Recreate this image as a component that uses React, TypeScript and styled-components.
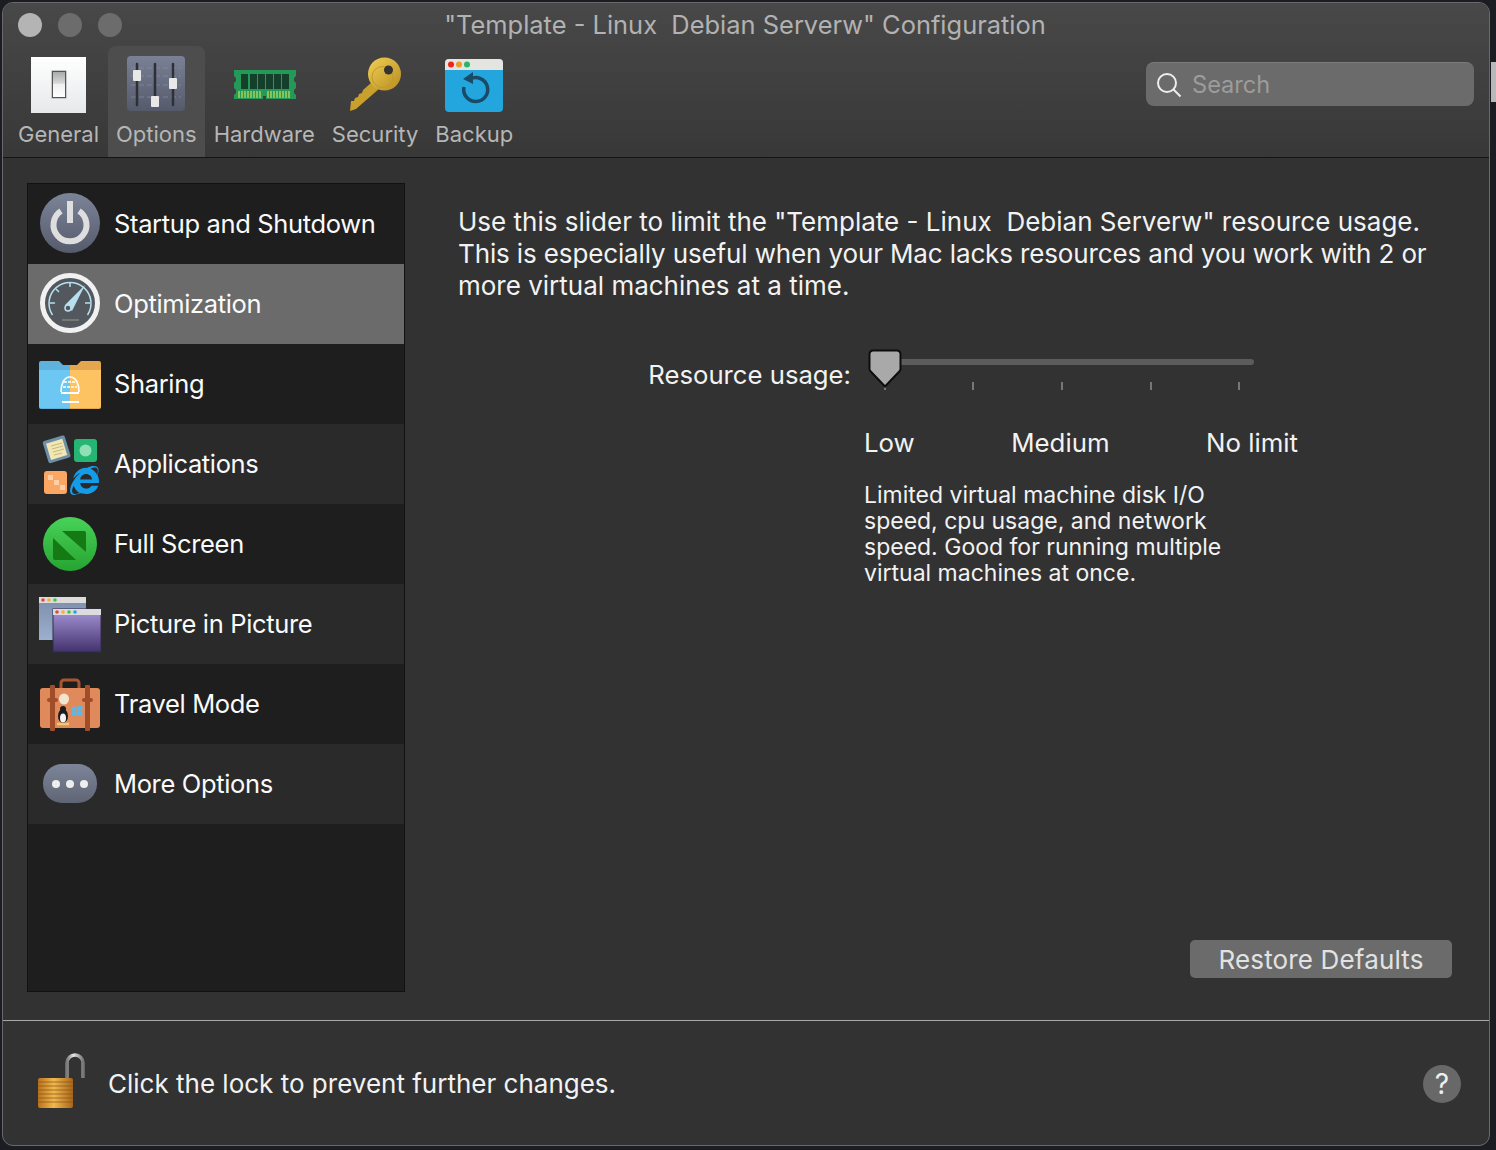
import React from "react";
import styled, { createGlobalStyle } from "styled-components";
import { FaInternetExplorer, FaWindows } from "react-icons/fa";

const GlobalStyle = createGlobalStyle`
  html, body { margin: 0; padding: 0; background: #1b1d22; }
  body { font-family: Inter, "Open Sans", "Liberation Sans", sans-serif; -webkit-font-smoothing: antialiased; }
`;

const Page = styled.div`
  display: flex;
  width: 1496px;
  height: 1150px;
  overflow: hidden;
  background: #1b1d22;
`;

const Window = styled.div`
  box-sizing: border-box;
  width: 1488px;
  height: 1144px;
  margin: 2px 0 0 2px;
  display: flex;
  flex-direction: column;
  background: #323232;
  border: 1px solid #6a6a6a;
  border-radius: 11px;
  overflow: hidden;
`;

const Strip = styled.div`
  flex: 1;
  padding-top: 62px;
`;

const Sliver = styled.div`
  width: 5px;
  margin-left: 1px;
  height: 40px;
  background: #b8b8b8;
`;

const Header = styled.header`
  height: 155px;
  flex: none;
  box-sizing: border-box;
  background: linear-gradient(#484848, #383838);
  border-bottom: 1px solid #141414;
`;

const TitleBar = styled.div`
  height: 43px;
  display: grid;
  grid-template-columns: 1fr auto 1fr;
  align-items: center;
  padding: 0 17px 0 15px;
`;

const Lights = styled.div`
  display: flex;
  gap: 16px;
`;

const Light = styled.span<{ $on?: boolean }>`
  width: 24px;
  height: 24px;
  border-radius: 50%;
  background: ${(p) => (p.$on ? "#b4b4b4" : "#6c6c6c")};
`;

const Title = styled.div`
  font-size: 25.45px;
  color: #b2b2b2;
  white-space: pre;
`;

const Toolbar = styled.div`
  display: flex;
  height: 111px;
  padding: 0 15px 0 6.5px;
`;

const ToolItem = styled.div<{ $active?: boolean }>`
  display: flex;
  flex-direction: column;
  align-items: center;
  padding: 6px 8.5px 0;
  border-radius: 8px 8px 0 0;
  background: ${(p) => (p.$active ? "#4d4d4d" : "transparent")};
`;

const ToolIcon = styled.svg`
  width: 64px;
  height: 64px;
  display: block;
`;

const ToolLabel = styled.span`
  margin-top: 4px;
  font-size: 22px;
  line-height: 28px;
  color: #b6b6b6;
  white-space: nowrap;
`;

const SearchBox = styled.div`
  margin: 16px 0 0 auto;
  align-self: flex-start;
  width: 328px;
  height: 44px;
  box-sizing: border-box;
  padding-left: 10px;
  display: flex;
  align-items: center;
  gap: 10px;
  border-radius: 8px;
  background: #6b6b6b;
  border-top: 1px solid #7b7b7b;
`;

const SearchText = styled.span`
  font-size: 23.6px;
  color: #9c9c9c;
`;

const Body = styled.main`
  flex: 1;
  display: flex;
  min-height: 0;
`;

const Sidebar = styled.nav`
  box-sizing: border-box;
  width: 378px;
  margin: 25px 0 28px 24px;
  flex: none;
  background: #1e1e1e;
  border: 1px solid #111;
`;

const Row = styled.div<{ $tone: "dark" | "light" | "selected" }>`
  height: 80px;
  display: flex;
  align-items: center;
  gap: 12px;
  padding-left: 10px;
  background: ${(p) => (p.$tone === "selected" ? "#6b6b6b" : p.$tone === "light" ? "#2a2a2a" : "#1e1e1e")};
`;

const RowIcon = styled.svg`
  width: 64px;
  height: 64px;
  flex: none;
`;

const RowLabel = styled.span`
  margin-bottom: 2px;
  font-size: 25.5px;
  color: #fafafa;
  white-space: nowrap;
  letter-spacing: -0.35px;
`;

const Content = styled.section`
  flex: 1;
  display: flex;
  flex-direction: column;
  padding: 48px 37px 42px 53px;
`;

const Intro = styled.div`
  font-size: 26px;
  line-height: 32px;
  color: #f2f2f2;
  white-space: pre;
`;

const IntroLine = styled.div<{ $tight?: boolean }>`
  letter-spacing: ${(p) => (p.$tight ? "-0.13px" : "0")};
`;

const SliderGrid = styled.div`
  margin-top: 47px;
  display: grid;
  grid-template-columns: 393px 434px;
  column-gap: 13px;
`;

const SliderLabel = styled.div`
  text-align: right;
  font-size: 25.7px;
  line-height: 32px;
  padding-top: 10px;
  color: #f2f2f2;
`;

const SliderBox = styled.div`
  position: relative;
  height: 60px;
`;

const Track = styled.div`
  position: absolute;
  left: 21px;
  top: 10px;
  width: 369px;
  height: 6px;
  border-radius: 3px;
  background: #5c5c5c;
`;

const Thumb = styled.svg`
  position: absolute;
  left: 4px;
  top: 0;
  width: 34px;
  height: 40px;
`;

const Tick = styled.span`
  position: absolute;
  top: 33px;
  width: 2px;
  height: 8px;
  background: #777;
`;

const Scale = styled.div`
  grid-column: 2;
  display: flex;
  justify-content: space-between;
  margin-top: 18px;
  font-size: 25.8px;
  line-height: 32px;
  color: #f2f2f2;
`;

const Note = styled.p`
  grid-column: 2;
  margin: 23px 0 0;
  font-size: 23px;
  line-height: 26px;
  color: #f2f2f2;
  white-space: pre;
`;

const RestoreButton = styled.button`
  margin: auto 0 0 auto;
  width: 262px;
  height: 38px;
  padding: 0;
  border: 0;
  border-radius: 5px;
  background: #6b6b6b;
  color: #e2e2e2;
  font: inherit;
  font-size: 26px;
  letter-spacing: 0.15px;
`;

const Footer = styled.footer`
  flex: none;
  height: 125px;
  box-sizing: border-box;
  display: flex;
  align-items: center;
  padding: 0 28px 0 32px;
  gap: 23px;
  border-top: 1px solid #a8a8a8;
`;

const LockIcon = styled.svg`
  width: 50px;
  height: 60px;
  flex: none;
  margin-bottom: 4px;
`;

const FooterText = styled.span`
  font-size: 26px;
  color: #f2f2f2;
`;

const HelpButton = styled.div`
  margin: 2px 0 0 auto;
  width: 38px;
  height: 38px;
  border-radius: 50%;
  background: #686868;
  color: #eee;
  display: flex;
  align-items: center;
  justify-content: center;
  font-size: 28px;
`;

function GeneralIcon() {
  return (
    <ToolIcon viewBox="0 0 64 64">
      <defs>
        <linearGradient id="genBg" x1="0" y1="0" x2="0" y2="1">
          <stop offset="0" stopColor="#ffffff" />
          <stop offset="1" stopColor="#e6e8ea" />
        </linearGradient>
        <linearGradient id="genSw" x1="0" y1="0" x2="0" y2="1">
          <stop offset="0" stopColor="#a8a8a8" />
          <stop offset="0.45" stopColor="#d8d8d8" />
          <stop offset="0.5" stopColor="#f0f0f0" />
          <stop offset="1" stopColor="#ffffff" />
        </linearGradient>
      </defs>
      <rect x="4" y="5" width="55" height="56" fill="url(#genBg)" />
      <rect x="24" y="18" width="16" height="29" rx="1.500" fill="#c9c9c9" />
      <rect x="25.500" y="19.500" width="13" height="26" fill="url(#genSw)" stroke="#555" strokeWidth="1" />
    </ToolIcon>
  );
}

function OptionsIcon() {
  return (
    <ToolIcon viewBox="0 0 64 64">
      <defs>
        <linearGradient id="optBg" x1="0" y1="0" x2="0" y2="1">
          <stop offset="0" stopColor="#7a8196" />
          <stop offset="1" stopColor="#555a6b" />
        </linearGradient>
      </defs>
      <rect x="3" y="4" width="58" height="55" rx="4" fill="url(#optBg)" />
      <g stroke="#8f95a6" strokeWidth="1" strokeDasharray="5 3" opacity="0.6">
        <path d="M7 16h50M7 24h50M7 33h50M7 45h50" />
      </g>
      <g stroke="#2e3038" strokeWidth="2.500" strokeLinecap="round">
        <path d="M13 12v41M31 12v41M49 12v41" />
      </g>
      <rect x="9" y="18" width="8" height="11" rx="1" fill="#e8e8e8" />
      <rect x="27" y="44" width="8" height="11" rx="1" fill="#e8e8e8" />
      <rect x="45" y="26" width="8" height="11" rx="1" fill="#e8e8e8" />
    </ToolIcon>
  );
}

function HardwareIcon() {
  return (
    <ToolIcon viewBox="0 0 64 64">
      <path d="M2 18h62v6l-2 2v3l2 2v5l-2 2v3l2 2v4H34v-3h-3v3H2v-4l2-2v-3l-2-2v-5l2-2v-3l-2-2z" fill="#259a58" />
      <g fill="#143f2a">
        <rect x="9" y="22" width="7" height="15" />
        <rect x="18" y="22" width="7" height="15" />
        <rect x="26" y="22" width="7" height="15" />
        <rect x="34" y="22" width="7" height="15" />
        <rect x="42" y="22" width="7" height="15" />
        <rect x="50" y="22" width="7" height="15" />
      </g>
      <g stroke="#b3d45a" strokeWidth="1.400">
        <path d="M7 39v7M10 39v7M13 39v7M16 39v7M19 39v7M22 39v7M25 39v7M28 39v7M36 39v7M39 39v7M42 39v7M45 39v7M48 39v7M51 39v7M54 39v7M57 39v7" />
      </g>
    </ToolIcon>
  );
}

function KeyIcon() {
  return (
    <ToolIcon viewBox="0 0 64 64">
      <defs>
        <linearGradient id="keyG" x1="0" y1="0" x2="1" y2="1">
          <stop offset="0" stopColor="#f0cf55" />
          <stop offset="1" stopColor="#b88d20" />
        </linearGradient>
      </defs>
      <path d="M7 59l1-10h3l1-3 3-1 1-3 3-1 1-3 8-7 9 5-24 21z" fill="#c9a02c" />
      <circle cx="41.500" cy="22" r="16.500" fill="url(#keyG)" />
      <circle cx="39.500" cy="25" r="10.500" fill="none" stroke="#c29a2a" strokeWidth="1" />
      <circle cx="45.500" cy="18" r="4.500" fill="#333" />
    </ToolIcon>
  );
}

function BackupIcon() {
  return (
    <ToolIcon viewBox="0 0 64 64">
      <rect x="3" y="7" width="58" height="53" rx="4" fill="#23a5de" />
      <path d="M3 18v-7a4 4 0 0 1 4-4h50a4 4 0 0 1 4 4v7z" fill="#e4e4e0" />
      <circle cx="9" cy="12.500" r="3" fill="#f0241f" />
      <circle cx="17" cy="12.500" r="3" fill="#ef9a2b" />
      <circle cx="25" cy="12.500" r="3" fill="#2bb56a" />
      <path d="M28 27a12 12 0 1 1-6 8" fill="none" stroke="#1a4a66" strokeWidth="3.500" />
      <path d="M21 27l10-7v12z" fill="#1a4a66" />
    </ToolIcon>
  );
}

function PowerIcon() {
  return (
    <RowIcon viewBox="0 0 64 64">
      <defs>
        <linearGradient id="powG" x1="0" y1="0" x2="0" y2="1">
          <stop offset="0" stopColor="#7c8498" />
          <stop offset="1" stopColor="#565b6c" />
        </linearGradient>
      </defs>
      <circle cx="32" cy="31" r="30" fill="url(#powG)" />
      <path d="M23 19a16.500 16.500 0 1 0 18 0" fill="none" stroke="#dedede" strokeWidth="6" />
      <rect x="29" y="9" width="6" height="22" fill="#dedede" />
    </RowIcon>
  );
}

function GaugeIcon() {
  return (
    <RowIcon viewBox="0 0 64 64">
      <circle cx="32" cy="31" r="27.500" fill="#53575e" stroke="#f1f1f1" strokeWidth="5" />
      <path d="M14.500 43a21 21 0 1 1 35 0" fill="none" stroke="#b7e0ee" strokeWidth="1.500" />
      <path d="M32 10v5M12 31h5M47 31h5M18 17l3 3" stroke="#b7e0ee" strokeWidth="1.500" />
      <path d="M27 33l20-20-13 26z" fill="#b7e0ee" />
      <circle cx="30" cy="36" r="3" fill="#53575e" stroke="#b7e0ee" strokeWidth="1.500" />
      <rect x="24" y="47" width="17" height="2" fill="#777" />
    </RowIcon>
  );
}

function FolderIcon() {
  return (
    <RowIcon viewBox="0 0 64 64">
      <path d="M1 11a2 2 0 0 1 2-2h18l4 4h7v44H3a2 2 0 0 1-2-2z" fill="#5fb2dc" />
      <path d="M63 11a2 2 0 0 0-2-2H43l-4 4h-7v44h29a2 2 0 0 0 2-2z" fill="#e4a650" />
      <path d="M1 18h31v38H3a2 2 0 0 1-2-2z" fill="#6cc8f2" />
      <path d="M32 18h31v36a2 2 0 0 1-2 2H32z" fill="#fdc362" />
      <g fill="none" stroke="#fff" strokeWidth="1.600">
        <path d="M23 40c0-8 3-15 9-15s9 7 9 15" />
        <path d="M26 30h12M25 35h14" strokeDasharray="3 1" />
      </g>
      <path d="M23 41h18M24 50h17" stroke="#fff" strokeWidth="2" />
    </RowIcon>
  );
}

function AppsIcon() {
  return (
    <RowIcon viewBox="0 0 64 64">
      <rect x="7" y="6" width="23" height="23" rx="2" fill="#6d8fa8" transform="rotate(-17 18 17)" />
      <rect x="10" y="9" width="17" height="17" fill="#f1e6b5" transform="rotate(-17 18 17)" />
      <path d="M13 14l11-3M14 17l11-3M15 20l11-3M16 23l8-2" stroke="#c5b97a" strokeWidth="1" />
      <rect x="36" y="7" width="23" height="23" rx="3" fill="#25b673" />
      <circle cx="47.500" cy="18.500" r="6" fill="#8fe0b7" />
      <rect x="6" y="39" width="23" height="23" rx="3" fill="#fba763" />
      <rect x="10" y="43" width="5" height="5" fill="#ffd0a8" />
      <rect x="16" y="48" width="5" height="5" fill="#ffd0a8" />
      <rect x="22" y="53" width="5" height="5" fill="#ffd0a8" />
      <FaInternetExplorer x={32} y={34} size={29} color="#159ce8" />
    </RowIcon>
  );
}

function FullScreenIcon() {
  return (
    <RowIcon viewBox="0 0 64 64">
      <defs>
        <linearGradient id="fsG" x1="0" y1="0" x2="0" y2="1">
          <stop offset="0" stopColor="#48d259" />
          <stop offset="1" stopColor="#26a431" />
        </linearGradient>
      </defs>
      <circle cx="32" cy="32" r="27" fill="url(#fsG)" />
      <path d="M24 19h22a2 2 0 0 1 2 2v19z" fill="#157a14" />
      <path d="M15 26v20a2 2 0 0 0 2 2h21z" fill="#157a14" />
    </RowIcon>
  );
}

function PipIcon() {
  return (
    <RowIcon viewBox="0 0 64 64">
      <defs>
        <linearGradient id="pipA" x1="0" y1="0" x2="0" y2="1">
          <stop offset="0" stopColor="#7d8cab" />
          <stop offset="1" stopColor="#9db0cf" />
        </linearGradient>
        <linearGradient id="pipB" x1="0" y1="0" x2="0" y2="1">
          <stop offset="0" stopColor="#a797d9" />
          <stop offset="1" stopColor="#43326c" />
        </linearGradient>
      </defs>
      <rect x="1" y="5" width="47" height="43" fill="url(#pipA)" />
      <rect x="1" y="5" width="47" height="6" fill="#dcdcdc" />
      <circle cx="5" cy="8" r="1.800" fill="#e8453f" />
      <circle cx="11" cy="8" r="1.800" fill="#f2b23a" />
      <circle cx="17" cy="8" r="1.800" fill="#3fc34a" />
      <rect x="15" y="17" width="48" height="43" fill="url(#pipB)" stroke="#2f2c4a" />
      <rect x="15" y="17" width="48" height="6" fill="#dcdcdc" />
      <circle cx="19" cy="20" r="1.800" fill="#e8453f" />
      <circle cx="25" cy="20" r="1.800" fill="#f2b23a" />
      <circle cx="31" cy="20" r="1.800" fill="#3fc34a" />
      <circle cx="37" cy="20" r="1.800" fill="#21a5e2" />
    </RowIcon>
  );
}

function SuitcaseIcon() {
  return (
    <RowIcon viewBox="0 0 64 64">
      <path d="M23 16v-5a3 3 0 0 1 3-3h12a3 3 0 0 1 3 3v5" fill="none" stroke="#a9552e" strokeWidth="3" />
      <rect x="2" y="16" width="60" height="40" rx="3" fill="#e08a5c" />
      <rect x="12" y="13" width="5" height="46" rx="1" fill="#a04d2a" />
      <rect x="47" y="13" width="5" height="46" rx="1" fill="#a04d2a" />
      <rect x="9" y="26" width="11" height="4" rx="2" fill="#a04d2a" />
      <rect x="44" y="26" width="11" height="4" rx="2" fill="#a04d2a" />
      <ellipse cx="26" cy="27" rx="5" ry="5.500" fill="#f4e4cf" />
      <ellipse cx="25" cy="44" rx="5" ry="7" fill="#1c1c1c" />
      <ellipse cx="25" cy="46" rx="3" ry="4.500" fill="#f4f4f4" />
      <circle cx="25" cy="37" r="3" fill="#1c1c1c" />
      <path d="M19 52h12" stroke="#f0c970" strokeWidth="2.500" />
      <FaWindows x={33} y={33} size={12} color="#58b9ea" />
    </RowIcon>
  );
}

function MoreIcon() {
  return (
    <RowIcon viewBox="0 0 64 64">
      <defs>
        <linearGradient id="moreG" x1="0" y1="0" x2="0" y2="1">
          <stop offset="0" stopColor="#7d8599" />
          <stop offset="1" stopColor="#5f6574" />
        </linearGradient>
      </defs>
      <rect x="5" y="12" width="54" height="39" rx="19" fill="url(#moreG)" />
      <circle cx="18" cy="32" r="4" fill="#eee" />
      <circle cx="32" cy="32" r="4" fill="#eee" />
      <circle cx="46" cy="32" r="4" fill="#eee" />
    </RowIcon>
  );
}

const rows: { label: string; tone: "dark" | "light" | "selected"; icon: React.ReactNode }[] = [
  { label: "Startup and Shutdown", tone: "dark", icon: <PowerIcon /> },
  { label: "Optimization", tone: "selected", icon: <GaugeIcon /> },
  { label: "Sharing", tone: "dark", icon: <FolderIcon /> },
  { label: "Applications", tone: "light", icon: <AppsIcon /> },
  { label: "Full Screen", tone: "dark", icon: <FullScreenIcon /> },
  { label: "Picture in Picture", tone: "light", icon: <PipIcon /> },
  { label: "Travel Mode", tone: "dark", icon: <SuitcaseIcon /> },
  { label: "More Options", tone: "light", icon: <MoreIcon /> },
];

const ticks = [21, 109, 198, 287, 375];

export default function App() {
  return (
    <Page>
      <GlobalStyle />
      <Window>
        <Header>
          <TitleBar>
            <Lights>
              <Light $on />
              <Light />
              <Light />
            </Lights>
            <Title>{'"Template - Linux  Debian Serverw" Configuration'}</Title>
          </TitleBar>
          <Toolbar>
            <ToolItem>
              <GeneralIcon />
              <ToolLabel>General</ToolLabel>
            </ToolItem>
            <ToolItem $active>
              <OptionsIcon />
              <ToolLabel>Options</ToolLabel>
            </ToolItem>
            <ToolItem>
              <HardwareIcon />
              <ToolLabel>Hardware</ToolLabel>
            </ToolItem>
            <ToolItem>
              <KeyIcon />
              <ToolLabel>Security</ToolLabel>
            </ToolItem>
            <ToolItem>
              <BackupIcon />
              <ToolLabel>Backup</ToolLabel>
            </ToolItem>
            <SearchBox>
              <svg width="26" height="26" viewBox="0 0 26 26" fill="none" stroke="#eee" strokeWidth="2">
                <circle cx="11" cy="11" r="9" />
                <path d="M17.500 17.500l7 7" />
              </svg>
              <SearchText>Search</SearchText>
            </SearchBox>
          </Toolbar>
        </Header>
        <Body>
          <Sidebar>
            {rows.map((r) => (
              <Row key={r.label} $tone={r.tone}>
                {r.icon}
                <RowLabel>{r.label}</RowLabel>
              </Row>
            ))}
          </Sidebar>
          <Content>
            <Intro>
              <IntroLine>{'Use this slider to limit the "Template - Linux  Debian Serverw" resource usage.'}</IntroLine>
              <IntroLine $tight>This is especially useful when your Mac lacks resources and you work with 2 or</IntroLine>
              <IntroLine>more virtual machines at a time.</IntroLine>
            </Intro>
            <SliderGrid>
              <SliderLabel>Resource usage:</SliderLabel>
              <SliderBox>
                <Track />
                {ticks.map((x) => (
                  <Tick key={x} style={{ left: x - 1 }} />
                ))}
                <Thumb viewBox="0 0 34 40">
                  <path
                    d="M5 1.500h24a3.500 3.500 0 0 1 3.500 3.500v15a3 3 0 0 1-1 2.200L17 37.500 2.500 22.200a3 3 0 0 1-1-2.200V5A3.500 3.500 0 0 1 5 1.500z"
                    fill="#a9a9a9"
                    stroke="#0d0d0d"
                    strokeWidth="2"
                  />
                </Thumb>
              </SliderBox>
              <Scale>
                <span>Low</span>
                <span>Medium</span>
                <span>No limit</span>
              </Scale>
              <Note>
                {"Limited virtual machine disk I/O\nspeed, cpu usage, and network\nspeed. Good for running multiple\nvirtual machines at once."}
              </Note>
            </SliderGrid>
            <RestoreButton>Restore Defaults</RestoreButton>
          </Content>
        </Body>
        <Footer>
          <LockIcon viewBox="0 0 50 60">
            <defs>
              <linearGradient id="lockB" x1="0" y1="0" x2="1" y2="0">
                <stop offset="0" stopColor="#b8721c" />
                <stop offset="0.45" stopColor="#f0b84e" />
                <stop offset="1" stopColor="#a8651a" />
              </linearGradient>
              <linearGradient id="lockS" x1="0" y1="0" x2="1" y2="0">
                <stop offset="0" stopColor="#7a7a7a" />
                <stop offset="0.4" stopColor="#e6e6e6" />
                <stop offset="1" stopColor="#777" />
              </linearGradient>
            </defs>
            <path d="M32 28V12a8 8 0 0 1 16 0v15" fill="none" stroke="url(#lockS)" strokeWidth="3.500" />
            <rect x="3" y="27" width="35" height="30" rx="2" fill="url(#lockB)" />
            <path
              d="M3 31h35M3 35h35M3 39h35M3 43h35M3 47h35M3 51h35"
              stroke="#8a5214"
              strokeWidth="1"
              opacity="0.7"
            />
          </LockIcon>
          <FooterText>Click the lock to prevent further changes.</FooterText>
          <HelpButton>?</HelpButton>
        </Footer>
      </Window>
      <Strip>
        <Sliver />
      </Strip>
    </Page>
  );
}
